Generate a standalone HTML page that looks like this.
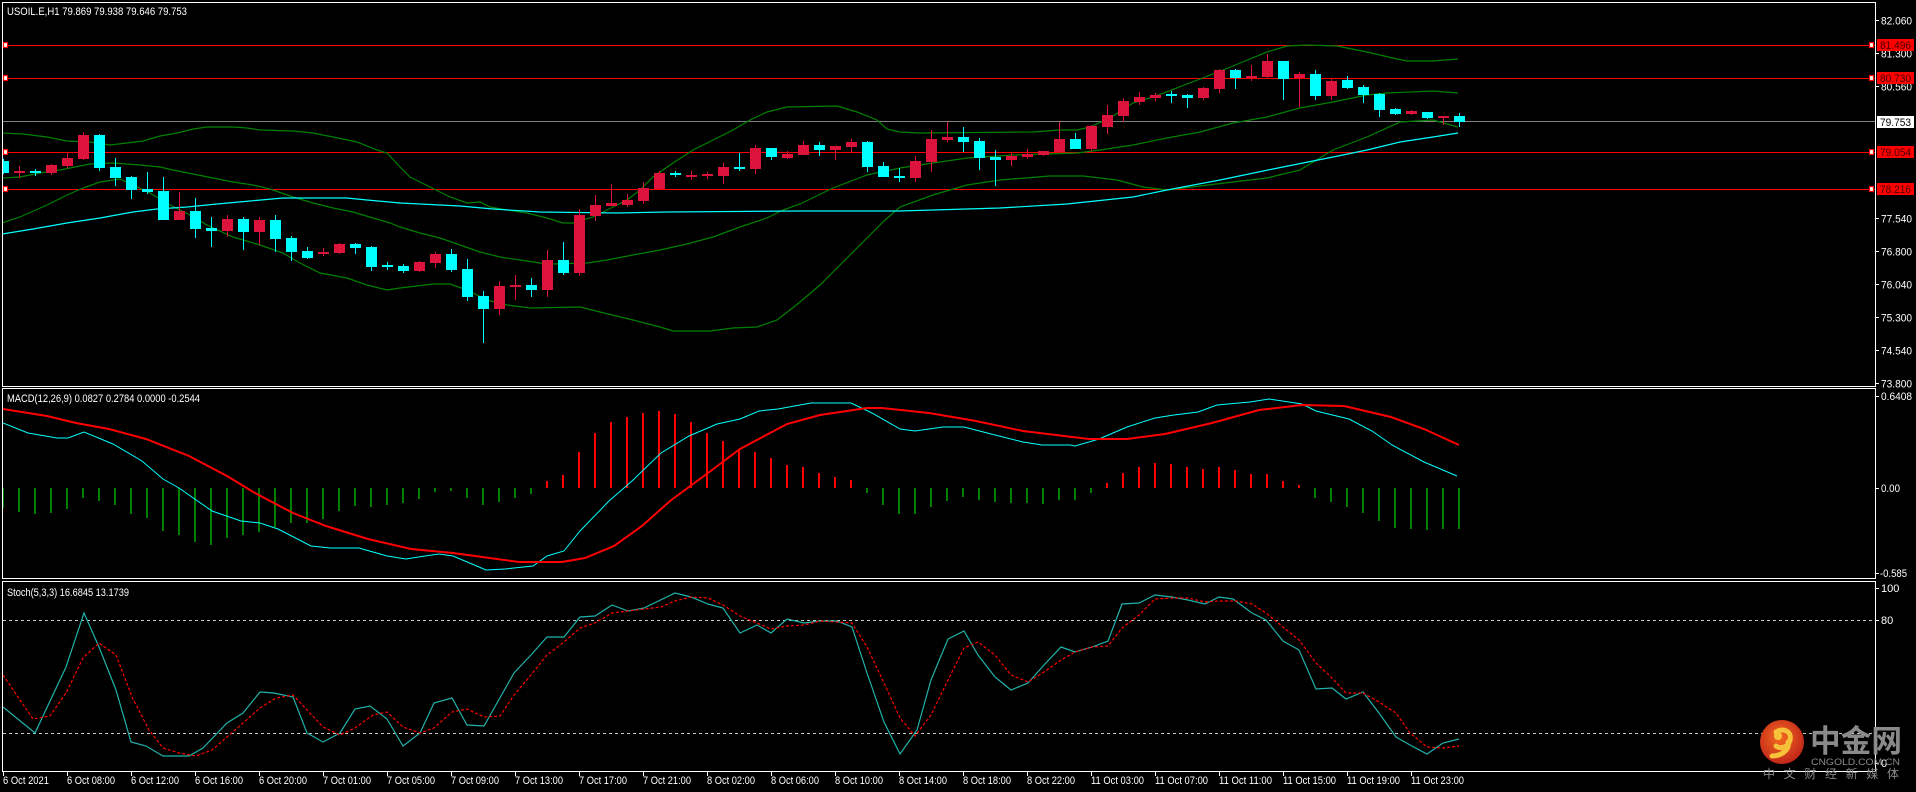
<!DOCTYPE html>
<html><head><meta charset="utf-8"><style>
html,body{margin:0;padding:0;background:#000;width:1916px;height:792px;overflow:hidden}
svg{display:block}
text{font-family:"Liberation Sans","Noto Sans CJK SC",sans-serif}
</style></head><body>
<svg width="1916" height="792" viewBox="0 0 1916 792" xmlns="http://www.w3.org/2000/svg">
<rect width="1916" height="792" fill="#000"/>
<defs>
<clipPath id="cm"><rect x="3" y="3" width="1872" height="383"/></clipPath>
<clipPath id="cd"><rect x="3" y="390" width="1872" height="189"/></clipPath>
<clipPath id="cs"><rect x="3" y="582" width="1872" height="189"/></clipPath>
<radialGradient id="lg" cx="45%" cy="40%" r="60%"><stop offset="0" stop-color="#f26a1f"/><stop offset="1" stop-color="#c2261a"/></radialGradient>
</defs>

<!-- panel borders -->
<g fill="none" stroke="#fff" stroke-width="1">
<rect x="2.5" y="2.5" width="1873" height="384"/>
<rect x="2.5" y="388.5" width="1873" height="190"/>
<rect x="2.5" y="581.5" width="1873" height="190"/>
</g>

<!-- MAIN PANEL -->
<g clip-path="url(#cm)">
<g fill="none" stroke-width="1">
<line x1="3" y1="121.5" x2="1875" y2="121.5" stroke="#808080"/>
<line x1="3" y1="45.5" x2="1875" y2="45.5" stroke="#ff0000"/>
<line x1="3" y1="78.5" x2="1875" y2="78.5" stroke="#ff0000"/>
<line x1="3" y1="152.5" x2="1875" y2="152.5" stroke="#ff0000"/>
<line x1="3" y1="189.5" x2="1875" y2="189.5" stroke="#ff0000"/>
</g>
<g fill="#fff" stroke="#ff0000" stroke-width="1.2">
<rect x="3.5" y="42.5" width="4" height="5"/><rect x="3.5" y="75.5" width="4" height="5"/><rect x="3.5" y="149.5" width="4" height="5"/><rect x="3.5" y="186.5" width="4" height="5"/>
<rect x="1869.5" y="42.5" width="4" height="5"/><rect x="1869.5" y="75.5" width="4" height="5"/><rect x="1869.5" y="149.5" width="4" height="5"/><rect x="1869.5" y="186.5" width="4" height="5"/>
</g>
<g fill="none" stroke="#008000" stroke-width="1.2">
<polyline points="2,133 23,134 47,137 67,141 90,142 110,145 127,143 143,141 160,136 177,133 193,129 207,127 233,127 247,128 260,130 293,131 313,133 333,137 357,142 377,150 387,153 400,167 410,177 430,187 450,197 467,203 480,202 490,207 507,210 527,213 547,218 563,223 573,223 593,217 607,210 627,200 640,190 653,177 673,163 693,150 713,140 733,130 750,120 767,112 787,107 837,106 857,112 877,120 887,129 900,132 920,133 1033,132 1060,130 1077,130 1090,127 1110,118 1133,103 1153,97 1200,79 1233,66 1267,52 1287,46 1307,45 1337,46 1367,52 1397,59 1407,61 1433,61 1458,59"/>
<polyline points="2,178 20,177 40,173 60,170 80,166 90,164 113,163 140,165 160,167 173,170 193,174 213,178 233,182 253,185 270,189 293,197 313,203 333,208 353,212 373,218 390,223 400,227 420,233 440,238 460,245 480,252 500,257 520,260 540,263 553,264 587,263 607,260 633,255 660,250 687,244 713,237 740,227 767,218 783,210 800,204 833,188 867,175 900,168 933,163 967,158 1013,155 1077,153 1100,150 1133,145 1167,138 1200,132 1233,123 1267,117 1300,108 1333,102 1367,95 1387,93 1433,91 1458,93"/>
<polyline points="2,223 20,217 47,205 67,195 83,188 100,182 120,179 133,185 150,193 170,205 190,215 207,225 233,237 260,245 283,253 300,263 320,273 347,278 367,285 387,290 400,288 433,284 450,284 467,290 487,300 507,305 530,308 580,307 600,312 633,320 660,327 673,331 710,331 733,328 757,327 777,320 790,310 800,302 820,285 850,255 870,235 885,220 900,207 933,195 967,185 1000,180 1050,176 1083,176 1117,180 1143,187 1167,190 1200,186 1233,182 1267,178 1300,170 1333,150 1367,137 1400,122 1433,120 1458,127"/>
</g>
<polyline fill="none" stroke="#00ffff" stroke-width="1.2" points="2,234 33,229 67,223 100,218 133,212 157,209 187,207 217,204 250,201 283,198 347,198 367,200 400,203 460,206 493,209 540,212 617,213 667,212 800,211 900,211 1000,208 1067,204 1133,197 1167,190 1220,180 1273,169 1333,157 1367,150 1400,142 1433,137 1458,133"/>
<!-- bearish (cyan) candles -->
<g fill="#00ffff">
<rect x="3" y="159" width="1" height="15"/><rect x="-2" y="161" width="11" height="12"/>
<rect x="35" y="169" width="1" height="7"/><rect x="30" y="171" width="11" height="2"/>
<rect x="99" y="134" width="1" height="37"/><rect x="94" y="135" width="11" height="33"/>
<rect x="115" y="158" width="1" height="28"/><rect x="110" y="167" width="11" height="11"/>
<rect x="131" y="176" width="1" height="23"/><rect x="126" y="177" width="11" height="13"/>
<rect x="147" y="172" width="1" height="22"/><rect x="142" y="189" width="11" height="3"/>
<rect x="163" y="177" width="1" height="43"/><rect x="158" y="191" width="11" height="29"/>
<rect x="195" y="198" width="1" height="40"/><rect x="190" y="211" width="11" height="18"/>
<rect x="211" y="217" width="1" height="30"/><rect x="206" y="228" width="11" height="3"/>
<rect x="243" y="217" width="1" height="33"/><rect x="238" y="219" width="11" height="13"/>
<rect x="275" y="215" width="1" height="37"/><rect x="270" y="220" width="11" height="19"/>
<rect x="291" y="236" width="1" height="25"/><rect x="286" y="238" width="11" height="14"/>
<rect x="307" y="247" width="1" height="12"/><rect x="302" y="251" width="11" height="7"/>
<rect x="355" y="243" width="1" height="11"/><rect x="350" y="244" width="11" height="4"/>
<rect x="371" y="246" width="1" height="25"/><rect x="366" y="247" width="11" height="20"/>
<rect x="387" y="262" width="1" height="8"/><rect x="382" y="265" width="11" height="2"/>
<rect x="403" y="264" width="1" height="9"/><rect x="398" y="266" width="11" height="5"/>
<rect x="451" y="249" width="1" height="23"/><rect x="446" y="254" width="11" height="16"/>
<rect x="467" y="259" width="1" height="42"/><rect x="462" y="269" width="11" height="28"/>
<rect x="483" y="291" width="1" height="52"/><rect x="478" y="296" width="11" height="13"/>
<rect x="531" y="278" width="1" height="19"/><rect x="526" y="285" width="11" height="5"/>
<rect x="563" y="242" width="1" height="33"/><rect x="558" y="260" width="11" height="13"/>
<rect x="675" y="171" width="1" height="6"/><rect x="670" y="173" width="11" height="2"/>
<rect x="739" y="153" width="1" height="18"/><rect x="734" y="167" width="11" height="2"/>
<rect x="771" y="148" width="1" height="12"/><rect x="766" y="148" width="11" height="9"/>
<rect x="819" y="142" width="1" height="14"/><rect x="814" y="145" width="11" height="5"/>
<rect x="867" y="141" width="1" height="31"/><rect x="862" y="142" width="11" height="25"/>
<rect x="883" y="162" width="1" height="15"/><rect x="878" y="166" width="11" height="11"/>
<rect x="899" y="168" width="1" height="14"/><rect x="894" y="176" width="11" height="2"/>
<rect x="963" y="127" width="1" height="25"/><rect x="958" y="137" width="11" height="5"/>
<rect x="979" y="138" width="1" height="32"/><rect x="974" y="141" width="11" height="17"/>
<rect x="995" y="150" width="1" height="36"/><rect x="990" y="157" width="11" height="3"/>
<rect x="1075" y="133" width="1" height="16"/><rect x="1070" y="139" width="11" height="10"/>
<rect x="1171" y="91" width="1" height="12"/><rect x="1166" y="94" width="11" height="2"/>
<rect x="1187" y="94" width="1" height="14"/><rect x="1182" y="95" width="11" height="3"/>
<rect x="1235" y="69" width="1" height="20"/><rect x="1230" y="70" width="11" height="8"/>
<rect x="1283" y="61" width="1" height="39"/><rect x="1278" y="61" width="11" height="18"/>
<rect x="1315" y="70" width="1" height="30"/><rect x="1310" y="74" width="11" height="22"/>
<rect x="1347" y="76" width="1" height="13"/><rect x="1342" y="80" width="11" height="8"/>
<rect x="1363" y="85" width="1" height="18"/><rect x="1358" y="87" width="11" height="8"/>
<rect x="1379" y="93" width="1" height="24"/><rect x="1374" y="94" width="11" height="16"/>
<rect x="1395" y="108" width="1" height="7"/><rect x="1390" y="109" width="11" height="5"/>
<rect x="1427" y="112" width="1" height="7"/><rect x="1422" y="112" width="11" height="6"/>
<rect x="1459" y="113" width="1" height="14"/><rect x="1454" y="116" width="11" height="6"/>
</g>
<!-- bullish (red) candles -->
<g fill="#dc143c">
<rect x="19" y="166" width="1" height="12"/><rect x="14" y="171" width="11" height="2"/>
<rect x="51" y="164" width="1" height="11"/><rect x="46" y="165" width="11" height="8"/>
<rect x="67" y="153" width="1" height="15"/><rect x="62" y="158" width="11" height="8"/>
<rect x="83" y="132" width="1" height="28"/><rect x="78" y="135" width="11" height="24"/>
<rect x="179" y="192" width="1" height="28"/><rect x="174" y="211" width="11" height="9"/>
<rect x="227" y="215" width="1" height="22"/><rect x="222" y="219" width="11" height="12"/>
<rect x="259" y="217" width="1" height="28"/><rect x="254" y="220" width="11" height="12"/>
<rect x="323" y="248" width="1" height="8"/><rect x="318" y="252" width="11" height="2"/>
<rect x="339" y="243" width="1" height="11"/><rect x="334" y="244" width="11" height="9"/>
<rect x="419" y="261" width="1" height="11"/><rect x="414" y="262" width="11" height="9"/>
<rect x="435" y="252" width="1" height="16"/><rect x="430" y="254" width="11" height="9"/>
<rect x="499" y="281" width="1" height="34"/><rect x="494" y="286" width="11" height="23"/>
<rect x="515" y="275" width="1" height="25"/><rect x="510" y="285" width="11" height="2"/>
<rect x="547" y="250" width="1" height="47"/><rect x="542" y="260" width="11" height="30"/>
<rect x="579" y="209" width="1" height="67"/><rect x="574" y="215" width="11" height="58"/>
<rect x="595" y="195" width="1" height="26"/><rect x="590" y="205" width="11" height="11"/>
<rect x="611" y="184" width="1" height="22"/><rect x="606" y="203" width="11" height="3"/>
<rect x="627" y="194" width="1" height="13"/><rect x="622" y="200" width="11" height="5"/>
<rect x="643" y="182" width="1" height="22"/><rect x="638" y="188" width="11" height="13"/>
<rect x="659" y="171" width="1" height="18"/><rect x="654" y="173" width="11" height="16"/>
<rect x="691" y="171" width="1" height="9"/><rect x="686" y="175" width="11" height="2"/>
<rect x="707" y="172" width="1" height="7"/><rect x="702" y="174" width="11" height="2"/>
<rect x="723" y="163" width="1" height="21"/><rect x="718" y="167" width="11" height="9"/>
<rect x="755" y="145" width="1" height="29"/><rect x="750" y="148" width="11" height="21"/>
<rect x="787" y="151" width="1" height="8"/><rect x="782" y="154" width="11" height="4"/>
<rect x="803" y="141" width="1" height="14"/><rect x="798" y="145" width="11" height="10"/>
<rect x="835" y="146" width="1" height="14"/><rect x="830" y="146" width="11" height="4"/>
<rect x="851" y="139" width="1" height="13"/><rect x="846" y="142" width="11" height="5"/>
<rect x="915" y="156" width="1" height="26"/><rect x="910" y="161" width="11" height="17"/>
<rect x="931" y="130" width="1" height="42"/><rect x="926" y="139" width="11" height="23"/>
<rect x="947" y="122" width="1" height="20"/><rect x="942" y="137" width="11" height="3"/>
<rect x="1011" y="153" width="1" height="13"/><rect x="1006" y="156" width="11" height="4"/>
<rect x="1027" y="149" width="1" height="10"/><rect x="1022" y="154" width="11" height="3"/>
<rect x="1043" y="151" width="1" height="5"/><rect x="1038" y="151" width="11" height="4"/>
<rect x="1059" y="122" width="1" height="30"/><rect x="1054" y="139" width="11" height="13"/>
<rect x="1091" y="125" width="1" height="26"/><rect x="1086" y="126" width="11" height="23"/>
<rect x="1107" y="105" width="1" height="29"/><rect x="1102" y="115" width="11" height="12"/>
<rect x="1123" y="98" width="1" height="24"/><rect x="1118" y="101" width="11" height="15"/>
<rect x="1139" y="92" width="1" height="13"/><rect x="1134" y="97" width="11" height="5"/>
<rect x="1155" y="93" width="1" height="8"/><rect x="1150" y="95" width="11" height="3"/>
<rect x="1203" y="87" width="1" height="13"/><rect x="1198" y="88" width="11" height="10"/>
<rect x="1219" y="69" width="1" height="24"/><rect x="1214" y="70" width="11" height="19"/>
<rect x="1251" y="65" width="1" height="16"/><rect x="1246" y="76" width="11" height="2"/>
<rect x="1267" y="54" width="1" height="24"/><rect x="1262" y="61" width="11" height="16"/>
<rect x="1299" y="72" width="1" height="35"/><rect x="1294" y="74" width="11" height="4"/>
<rect x="1331" y="79" width="1" height="21"/><rect x="1326" y="81" width="11" height="15"/>
<rect x="1411" y="110" width="1" height="5"/><rect x="1406" y="111" width="11" height="3"/>
<rect x="1443" y="116" width="1" height="9"/><rect x="1438" y="116" width="11" height="2"/>
</g>
</g>
<text x="7" y="15" fill="#fff" font-size="11" textLength="180" lengthAdjust="spacingAndGlyphs">USOIL.E,H1  79.869 79.938 79.646 79.753</text>

<!-- right price axis main -->
<g stroke="#fff" stroke-width="1">
<line x1="1876" y1="20.5" x2="1879" y2="20.5"/><line x1="1876" y1="53.5" x2="1879" y2="53.5"/><line x1="1876" y1="86.5" x2="1879" y2="86.5"/><line x1="1876" y1="218.5" x2="1879" y2="218.5"/><line x1="1876" y1="251.5" x2="1879" y2="251.5"/><line x1="1876" y1="284.5" x2="1879" y2="284.5"/><line x1="1876" y1="317.5" x2="1879" y2="317.5"/><line x1="1876" y1="350.5" x2="1879" y2="350.5"/><line x1="1876" y1="383.5" x2="1879" y2="383.5"/>
<line x1="1876" y1="396.5" x2="1879" y2="396.5"/><line x1="1876" y1="488.5" x2="1879" y2="488.5"/><line x1="1876" y1="573.5" x2="1879" y2="573.5"/>
<line x1="1876" y1="588.5" x2="1879" y2="588.5"/><line x1="1876" y1="620.5" x2="1879" y2="620.5"/><line x1="1876" y1="763.5" x2="1879" y2="763.5"/>
</g>
<g fill="#fff" font-size="11">
<text x="1881" y="24.5" textLength="31" lengthAdjust="spacingAndGlyphs">82.060</text>
<text x="1881" y="57.5" textLength="31" lengthAdjust="spacingAndGlyphs">81.300</text>
<text x="1881" y="90.5" textLength="31" lengthAdjust="spacingAndGlyphs">80.560</text>
<text x="1881" y="222.5" textLength="31" lengthAdjust="spacingAndGlyphs">77.540</text>
<text x="1881" y="255.5" textLength="31" lengthAdjust="spacingAndGlyphs">76.800</text>
<text x="1881" y="288.5" textLength="31" lengthAdjust="spacingAndGlyphs">76.040</text>
<text x="1881" y="321.5" textLength="31" lengthAdjust="spacingAndGlyphs">75.300</text>
<text x="1881" y="354.5" textLength="31" lengthAdjust="spacingAndGlyphs">74.540</text>
<text x="1881" y="387.5" textLength="31" lengthAdjust="spacingAndGlyphs">73.800</text>
<text x="1881" y="400" textLength="31" lengthAdjust="spacingAndGlyphs">0.6408</text>
<text x="1881" y="492" textLength="19" lengthAdjust="spacingAndGlyphs">0.00</text>
<text x="1880" y="577" textLength="27" lengthAdjust="spacingAndGlyphs">-0.585</text>
<text x="1881" y="592">100</text>
<text x="1881" y="624">80</text>
<text x="1881" y="767">0</text>
</g>
<g font-size="11">
<rect x="1877" y="39" width="37" height="12" fill="#ff0000"/><text x="1880" y="49" fill="#400" textLength="31" lengthAdjust="spacingAndGlyphs">81.496</text>
<rect x="1877" y="72" width="37" height="12" fill="#ff0000"/><text x="1880" y="82" fill="#400" textLength="31" lengthAdjust="spacingAndGlyphs">80.730</text>
<rect x="1877" y="116" width="37" height="12" fill="#fff"/><text x="1880" y="126" fill="#000" textLength="31" lengthAdjust="spacingAndGlyphs">79.753</text>
<rect x="1877" y="146" width="37" height="12" fill="#ff0000"/><text x="1880" y="156" fill="#400" textLength="31" lengthAdjust="spacingAndGlyphs">79.054</text>
<rect x="1877" y="183" width="37" height="12" fill="#ff0000"/><text x="1880" y="193" fill="#400" textLength="31" lengthAdjust="spacingAndGlyphs">78.216</text>
</g>

<!-- MACD PANEL -->
<g clip-path="url(#cd)">
<path stroke="#008000" stroke-width="2" fill="none" d="M3 488V508M19 488V512M35 488V514M51 488V513M67 488V509M83 488V498M99 488V501M115 488V505M131 488V514M147 488V518M163 488V531M179 488V535M195 488V542M211 488V545M227 488V538M243 488V535M259 488V532M275 488V527M291 488V523M307 488V523M323 488V519M339 488V511M355 488V506M371 488V507M387 488V505M403 488V503M419 488V499M435 488V492M451 488V491M467 488V498M483 488V505M499 488V502M515 488V498M531 488V494M867 488V493M883 488V505M899 488V514M915 488V514M931 488V507M947 488V501M963 488V497M979 488V500M995 488V502M1011 488V503M1027 488V503M1043 488V504M1059 488V500M1075 488V500M1091 488V493M1315 488V498M1331 488V502M1347 488V507M1363 488V513M1379 488V521M1395 488V528M1411 488V529M1427 488V530M1443 488V529M1459 488V529"/>
<path stroke="#ff0000" stroke-width="2" fill="none" d="M547 488V481M563 488V475M579 488V452M595 488V433M611 488V422M627 488V417M643 488V413M659 488V411M675 488V414M691 488V422M707 488V433M723 488V441M739 488V449M755 488V452M771 488V458M787 488V465M803 488V467M819 488V473M835 488V477M851 488V480M1107 488V483M1123 488V473M1139 488V467M1155 488V463M1171 488V464M1187 488V467M1203 488V469M1219 488V467M1235 488V470M1251 488V474M1267 488V474M1283 488V481M1299 488V485"/>
<polyline fill="none" stroke="#00ffff" stroke-width="1" points="3,423 28,433 57,438 68,438 84,432 113,444 142,461 163,479 179,488 212,511 241,521 260,523 278,529 311,546 330,548 359,548 387,556 406,559 425,556 439,554 453,556 472,564 486,570 505,569 533,566 547,556 564,551 580,531 609,501 632,481 661,453 689,436 717,424 740,419 759,411 778,409 811,403 851,403 872,413 900,429 915,431 943,427 964,427 995,435 1023,442 1042,445 1070,445 1075,446 1099,439 1127,427 1155,418 1174,415 1198,412 1217,405 1250,402 1269,399 1302,404 1316,411 1349,419 1372,431 1392,445 1424,462 1457,476"/>
<polyline fill="none" stroke="#ff0000" stroke-width="2" points="3,409 47,416 76,423 109,429 146,439 189,456 227,476 255,493 293,513 326,526 368,539 411,549 453,553 519,562 562,562 585,558 614,546 642,526 670,501 708,473 740,449 787,424 820,415 867,408 882,408 929,413 976,421 1023,431 1089,439 1127,439 1165,434 1212,423 1259,410 1302,405 1344,406 1391,417 1424,429 1459,445"/>
</g>
<text x="7" y="402" fill="#fff" font-size="11" textLength="193" lengthAdjust="spacingAndGlyphs">MACD(12,26,9) 0.0827 0.2784 0.0000 -0.2544</text>

<!-- STOCH PANEL -->
<g clip-path="url(#cs)">
<g stroke="#c8c8c8" stroke-width="1" stroke-dasharray="3,3">
<line x1="3" y1="620.5" x2="1875" y2="620.5"/>
<line x1="3" y1="733.5" x2="1875" y2="733.5"/>
</g>
<polyline fill="none" stroke="#20b2aa" stroke-width="1.2" points="3,707 35,733 66,667 84,613 99,647 116,690 131,742 146,746 163,756 189,756 203,748 227,723 243,713 260,692 274,693 293,697 307,733 323,742 340,733 355,709 370,706 387,719 403,746 420,733 434,703 452,698 467,725 484,726 514,673 531,655 547,637 564,637 580,617 595,616 612,605 628,611 644,608 675,593 691,597 708,604 723,608 740,633 757,625 771,633 787,619 804,623 820,621 837,621 852,627 867,673 884,722 900,754 917,730 931,680 948,639 964,631 978,655 995,677 1011,690 1028,683 1044,665 1061,647 1075,652 1092,647 1108,641 1122,604 1139,603 1155,595 1172,597 1188,600 1205,604 1219,597 1233,599 1252,613 1266,620 1283,641 1299,650 1316,689 1332,688 1346,699 1363,692 1379,713 1396,737 1410,745 1427,754 1443,743 1459,739"/>
<polyline fill="none" stroke="#ff0000" stroke-width="1.2" stroke-dasharray="3,2" points="3,675 33,719 50,716 66,693 83,658 99,643 116,655 132,697 149,730 163,748 179,753 196,756 212,750 227,737 243,723 260,708 276,698 293,695 307,710 323,727 340,735 355,728 373,715 387,712 403,727 420,733 434,728 452,712 467,709 484,717 500,716 514,695 531,675 547,655 564,642 580,628 595,623 612,613 628,611 661,607 675,601 691,597 708,598 723,605 740,616 757,623 771,629 787,626 804,625 820,621 837,622 852,623 867,647 884,683 900,718 915,736 931,715 948,680 964,648 978,642 995,655 1011,675 1028,682 1044,672 1061,660 1075,652 1092,647 1108,646 1122,628 1139,615 1155,599 1172,598 1188,598 1205,602 1219,601 1236,601 1252,604 1266,613 1283,627 1299,640 1316,663 1332,678 1346,693 1363,693 1379,702 1396,713 1410,733 1427,747 1443,748 1459,746"/>
</g>
<text x="7" y="596" fill="#fff" font-size="11" textLength="122" lengthAdjust="spacingAndGlyphs">Stoch(5,3,3) 16.6845 13.1739</text>

<!-- time axis -->
<path stroke="#fff" stroke-width="1" d="M3.5 772V776M67.5 772V776M131.5 772V776M195.5 772V776M259.5 772V776M323.5 772V776M387.5 772V776M451.5 772V776M515.5 772V776M579.5 772V776M643.5 772V776M707.5 772V776M771.5 772V776M835.5 772V776M899.5 772V776M963.5 772V776M1027.5 772V776M1091.5 772V776M1155.5 772V776M1219.5 772V776M1283.5 772V776M1347.5 772V776M1411.5 772V776"/>
<g fill="#fff" font-size="11">
<text x="3" y="784" textLength="46" lengthAdjust="spacingAndGlyphs">6 Oct 2021</text>
<text x="67" y="784" textLength="48" lengthAdjust="spacingAndGlyphs">6 Oct 08:00</text>
<text x="131" y="784" textLength="48" lengthAdjust="spacingAndGlyphs">6 Oct 12:00</text>
<text x="195" y="784" textLength="48" lengthAdjust="spacingAndGlyphs">6 Oct 16:00</text>
<text x="259" y="784" textLength="48" lengthAdjust="spacingAndGlyphs">6 Oct 20:00</text>
<text x="323" y="784" textLength="48" lengthAdjust="spacingAndGlyphs">7 Oct 01:00</text>
<text x="387" y="784" textLength="48" lengthAdjust="spacingAndGlyphs">7 Oct 05:00</text>
<text x="451" y="784" textLength="48" lengthAdjust="spacingAndGlyphs">7 Oct 09:00</text>
<text x="515" y="784" textLength="48" lengthAdjust="spacingAndGlyphs">7 Oct 13:00</text>
<text x="579" y="784" textLength="48" lengthAdjust="spacingAndGlyphs">7 Oct 17:00</text>
<text x="643" y="784" textLength="48" lengthAdjust="spacingAndGlyphs">7 Oct 21:00</text>
<text x="707" y="784" textLength="48" lengthAdjust="spacingAndGlyphs">8 Oct 02:00</text>
<text x="771" y="784" textLength="48" lengthAdjust="spacingAndGlyphs">8 Oct 06:00</text>
<text x="835" y="784" textLength="48" lengthAdjust="spacingAndGlyphs">8 Oct 10:00</text>
<text x="899" y="784" textLength="48" lengthAdjust="spacingAndGlyphs">8 Oct 14:00</text>
<text x="963" y="784" textLength="48" lengthAdjust="spacingAndGlyphs">8 Oct 18:00</text>
<text x="1027" y="784" textLength="48" lengthAdjust="spacingAndGlyphs">8 Oct 22:00</text>
<text x="1091" y="784" textLength="53" lengthAdjust="spacingAndGlyphs">11 Oct 03:00</text>
<text x="1155" y="784" textLength="53" lengthAdjust="spacingAndGlyphs">11 Oct 07:00</text>
<text x="1219" y="784" textLength="53" lengthAdjust="spacingAndGlyphs">11 Oct 11:00</text>
<text x="1283" y="784" textLength="53" lengthAdjust="spacingAndGlyphs">11 Oct 15:00</text>
<text x="1347" y="784" textLength="53" lengthAdjust="spacingAndGlyphs">11 Oct 19:00</text>
<text x="1411" y="784" textLength="53" lengthAdjust="spacingAndGlyphs">11 Oct 23:00</text>
</g>

<!-- logo -->
<g>
<circle cx="1782" cy="742" r="22" fill="url(#lg)"/>
<path d="M1776 732c8-5 16 0 14 8-2 8-10 9-14 6M1788 742c2 7-6 14-16 14" fill="none" stroke="#f7c23a" stroke-width="5" stroke-linecap="round"/>
<circle cx="1778" cy="736" r="4" fill="#f7c23a"/>
<text x="1810" y="752" fill="#8a8a8a" font-size="31" font-weight="bold" font-family="'Noto Sans CJK SC','WenQuanYi Zen Hei',sans-serif" textLength="92" lengthAdjust="spacingAndGlyphs">中金网</text>
<text x="1811" y="765" fill="#8a8a8a" font-size="9" textLength="89" lengthAdjust="spacingAndGlyphs">CNGOLD.COM.CN</text>
<text x="1763" y="778" fill="#8a8a8a" font-size="12" font-family="'Noto Sans CJK SC','WenQuanYi Zen Hei',sans-serif" textLength="136" lengthAdjust="spacing">中文财经新媒体</text>
</g>
</svg>
</body></html>
